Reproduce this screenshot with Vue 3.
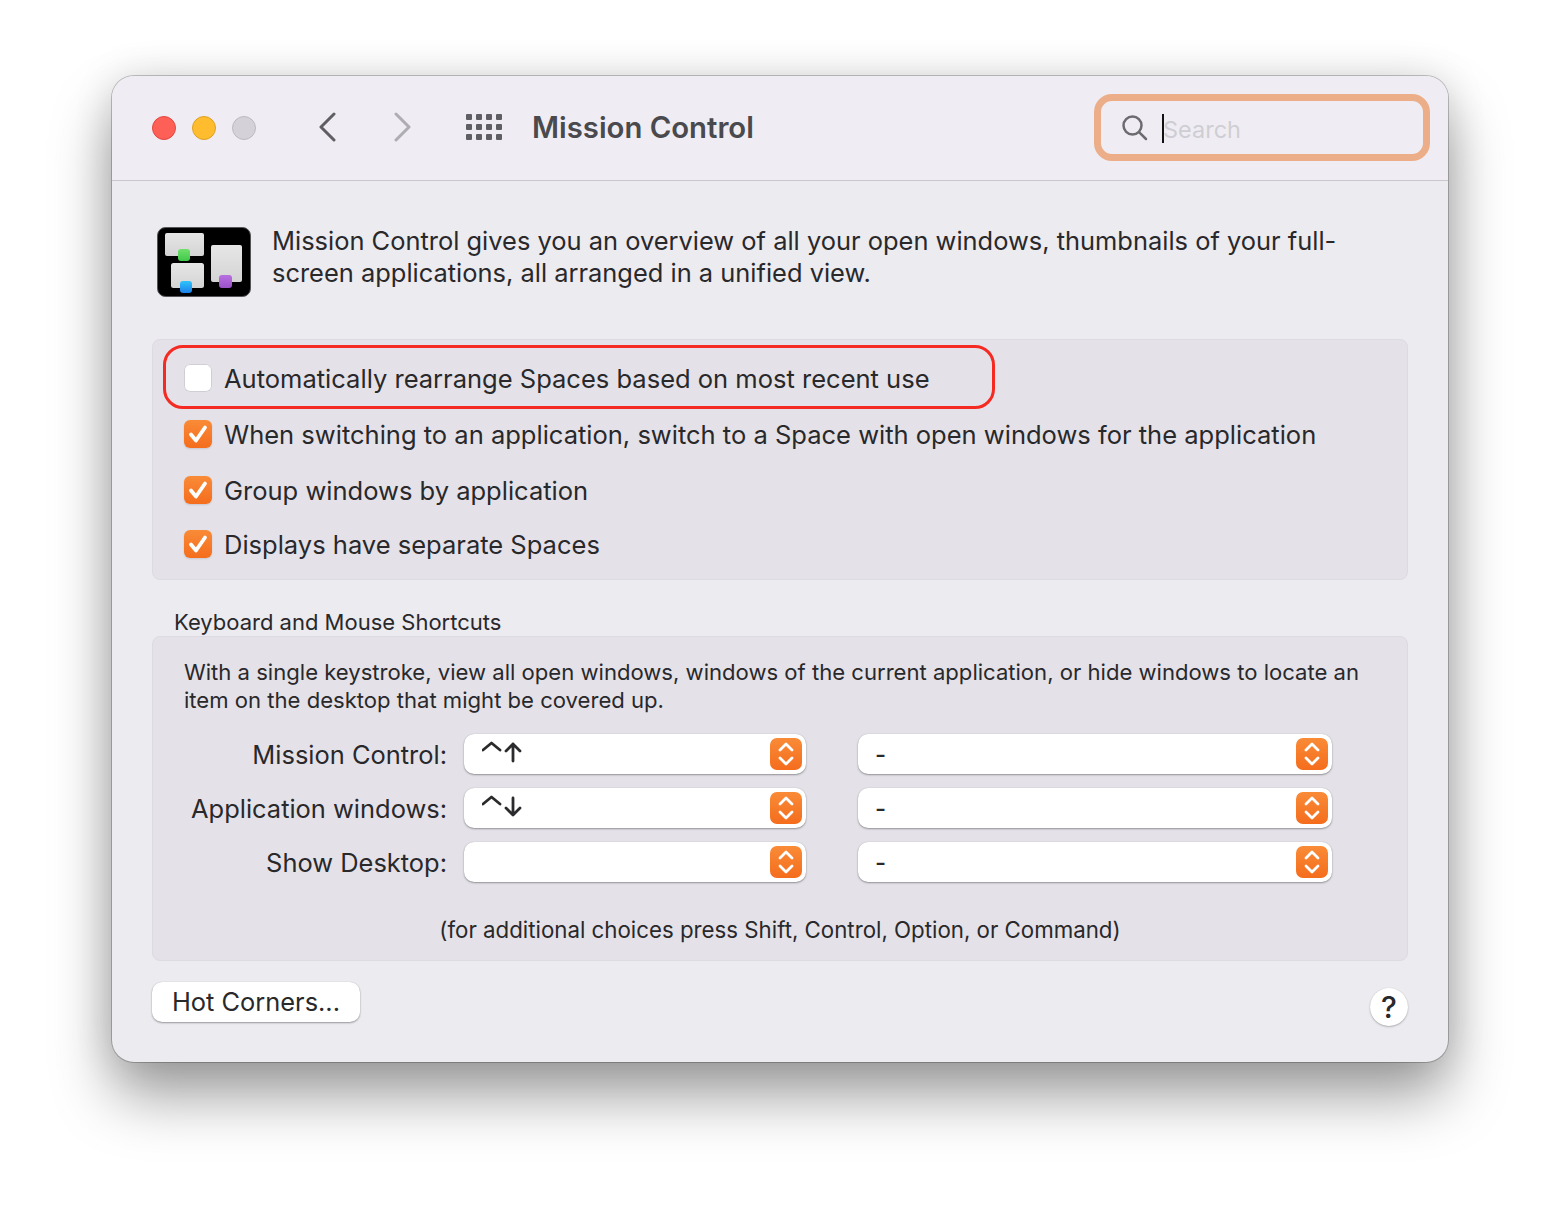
<script setup>
const options = [
  { label: 'Automatically rearrange Spaces based on most recent use', checked: false, highlight: true },
  { label: 'When switching to an application, switch to a Space with open windows for the application', checked: true },
  { label: 'Group windows by application', checked: true },
  { label: 'Displays have separate Spaces', checked: true },
]
const shortcuts = [
  { label: 'Mission Control:', key: 'up' },
  { label: 'Application windows:', key: 'down' },
  { label: 'Show Desktop:', key: '' },
]
</script>

<template>
  <div class="page">
    <main class="window">
      <header class="titlebar">
        <div class="lights">
          <span class="light red"></span>
          <span class="light yellow"></span>
          <span class="light gray"></span>
        </div>
        <svg class="chev back" width="18" height="30" viewBox="0 0 18 30"><path d="M16 2 3 15l13 13" /></svg>
        <svg class="chev fwd" width="18" height="30" viewBox="0 0 18 30"><path d="M2 2l13 13L2 28" /></svg>
        <div class="apps"><i v-for="n in 12" :key="n"></i></div>
        <h1 class="title">Mission Control</h1>
        <div class="search">
          <svg width="28" height="28" viewBox="0 0 28 28" class="glass"><circle cx="11.500" cy="11.500" r="9" /><path d="M18.300 18.300 25 25" /></svg>
          <span class="caret"></span>
          <span class="placeholder">Search</span>
        </div>
      </header>

      <div class="content">
        <section class="intro">
          <svg class="mc-icon" width="94" height="70" viewBox="0 0 94 70">
            <defs>
              <linearGradient id="gw" x1="0" y1="0" x2="0" y2="1"><stop offset="0" stop-color="#e6e6e6" /><stop offset="1" stop-color="#d4d4d4" /></linearGradient>
              <linearGradient id="gg" x1="0" y1="0" x2="0" y2="1"><stop offset="0" stop-color="#6fe06a" /><stop offset="1" stop-color="#3fc94a" /></linearGradient>
              <linearGradient id="gb" x1="0" y1="0" x2="0" y2="1"><stop offset="0" stop-color="#2fc4fa" /><stop offset="1" stop-color="#1c80ea" /></linearGradient>
              <linearGradient id="gp" x1="0" y1="0" x2="0" y2="1"><stop offset="0" stop-color="#b76fe0" /><stop offset="1" stop-color="#9a52c8" /></linearGradient>
            </defs>
            <rect x="0.500" y="0.500" width="93" height="69" rx="8" fill="#000" stroke="#55545a" stroke-width="1" />
            <rect x="8" y="6" width="39" height="23" rx="2" fill="url(#gw)" />
            <rect x="14" y="36" width="33" height="25" rx="2.500" fill="url(#gw)" />
            <rect x="54" y="18" width="31" height="37" rx="2" fill="url(#gw)" />
            <rect x="21" y="22" width="12" height="12" rx="3" fill="url(#gg)" />
            <rect x="23" y="54" width="12" height="12" rx="3" fill="url(#gb)" />
            <rect x="62" y="48" width="13" height="13" rx="3" fill="url(#gp)" />
          </svg>
          <p>Mission Control gives you an overview of all your open windows, thumbnails of your full-<br />screen applications, all arranged in a unified view.</p>
        </section>

        <section class="panel options">
          <div v-for="o in options" :key="o.label" class="option" :class="{ hl: o.highlight }">
            <span v-if="o.highlight" class="ring"></span>
            <span class="check" :class="{ on: o.checked }">
              <svg v-if="o.checked" width="28" height="28" viewBox="0 0 28 28"><path d="M7 14.500l5 6L21 7.500" /></svg>
            </span>
            <span>{{ o.label }}</span>
          </div>
        </section>

        <h2 class="section-label">Keyboard and Mouse Shortcuts</h2>
        <section class="panel shortcuts">
          <p class="blurb">With a single keystroke, view all open windows, windows of the current application, or hide windows to locate an<br />item on the desktop that might be covered up.</p>
          <div class="rows">
            <template v-for="s in shortcuts" :key="s.label">
              <label class="row-label">{{ s.label }}</label>
              <div class="select first">
                <svg v-if="s.key" class="keys" width="42" height="24" viewBox="0 0 42 24">
                  <path d="M1 9 9.500 2 18 9" />
                  <path v-if="s.key === 'up'" d="M24 10l7-7 7 7M31 3v17" />
                  <path v-else d="M24 13l7 7 7-7M31 3v17" />
                </svg>
                <span class="stepper"><svg width="32" height="32" viewBox="0 0 32 32"><path d="M10 12l6-6 6 6M10 20l6 6 6-6" /></svg></span>
              </div>
              <div class="select second">
                <span class="dash">-</span>
                <span class="stepper"><svg width="32" height="32" viewBox="0 0 32 32"><path d="M10 12l6-6 6 6M10 20l6 6 6-6" /></svg></span>
              </div>
            </template>
          </div>
          <p class="note">(for additional choices press Shift, Control, Option, or Command)</p>
        </section>

        <footer class="footer">
          <button class="btn">Hot Corners...</button>
          <button class="help">?</button>
        </footer>
      </div>
    </main>
  </div>
</template>

<style>
html, body { margin: 0; background: #fff; }
</style>

<style scoped>
.page {
  width: 1560px;
  height: 1210px;
  box-sizing: border-box;
  padding: 76px 112px 0;
  font-family: Inter, "Liberation Sans", sans-serif;
  color: #29282b;
  overflow: hidden;
}
.window {
  width: 1336px;
  height: 986px;
  border-radius: 22px;
  background: #ecebf0;
  box-shadow: 0 0 0 1px rgba(0, 0, 0, 0.22), 0 34px 60px rgba(0, 0, 0, 0.38), 0 0 40px rgba(0, 0, 0, 0.12);
  overflow: hidden;
  display: flex;
  flex-direction: column;
}
.titlebar {
  height: 104px;
  flex: none;
  background: #efedf3;
  border-bottom: 1px solid #c9c7cc;
  display: flex;
  align-items: center;
  padding: 0 18px 0 40px;
}
.lights { display: flex; gap: 16px; }
.light { width: 24px; height: 24px; border-radius: 50%; box-sizing: border-box; border: 1px solid; }
.red { background: #fe5f57; border-color: #e3463f; }
.yellow { background: #febc2e; border-color: #dea123; }
.gray { background: #d4d2d8; border-color: #bcbac0; }
.chev { fill: none; stroke-width: 3; stroke-linecap: round; stroke-linejoin: round; margin-top: -2px; }
.back { margin-left: 62px; stroke: #5f5e62; }
.fwd { margin-left: 58px; stroke: #aeadb1; }
.apps {
  margin-left: 54px;
  margin-top: -2px;
  display: grid;
  grid-template-columns: repeat(4, 6px);
  grid-auto-rows: 6px;
  gap: 4px 4px;
}
.apps i { background: #5f5e62; border-radius: 1px; }
.title {
  margin: -2px 0 0 30px;
  font-size: 29.300px;
  font-weight: 600;
  color: #4a494d;
  letter-spacing: 0;
  flex: 1;
}
.search {
  width: 336px;
  height: 67px;
  box-sizing: border-box;
  border: 7px solid #ecae88;
  border-radius: 18px;
  display: flex;
  align-items: center;
  margin-top: -1px;
  padding-left: 20px;
}
.glass { fill: none; stroke: #6c6b70; stroke-width: 2.500; stroke-linecap: round; }
.caret { width: 2px; height: 29px; background: #111; margin: 2px 0 0 13px; }
.placeholder { font-size: 23.500px; color: #cfcdd4; margin: 4px 0 0 -1px; }
.content { flex: 1; padding: 0 40px; display: flex; flex-direction: column; }
.intro { display: flex; gap: 21px; padding: 46px 0 0 5px; height: 112px; box-sizing: content-box; flex: none; }
.intro p { margin: -2px 0 0; font-size: 25.440px; line-height: 32px; }
.mc-icon { flex: none; }
.panel {
  background: #e4e2e8;
  border: 1px solid #dddbe1;
  border-radius: 8px;
  box-sizing: border-box;
}
.options { height: 241px; padding: 10px 0 0 31px; flex: none; }
.option { position: relative; display: flex; align-items: center; gap: 12px; font-size: 25.530px; height: 56px; }
.option:nth-child(4) { margin-top: -2px; }
.ring {
  position: absolute;
  left: -21px;
  top: -5px;
  width: 832px;
  height: 64px;
  border: 3px solid #f52a22;
  border-radius: 20px;
  box-sizing: border-box;
}
.check {
  width: 28px;
  height: 28px;
  border-radius: 6px;
  background: #fff;
  box-shadow: inset 0 0 0 1px #d0ced3;
  flex: none;
  display: block;
}
.check.on { background: linear-gradient(#f98b37, #f46d1d); box-shadow: 0 1px 2px rgba(0, 0, 0, 0.12); }
.check svg { display: block; fill: none; stroke: #fff; stroke-width: 3.800; stroke-linecap: round; stroke-linejoin: round; }
.section-label { margin: 29px 0 1px 22px; font-size: 22px; line-height: 26px; font-weight: 400; flex: none; }
.shortcuts { height: 325px; padding: 21px 0 0 31px; position: relative; flex: none; }
.blurb { margin: 0; font-size: 22.090px; line-height: 28px; }
.rows {
  margin-top: 20px;
  display: grid;
  grid-template-columns: 280px 342px 474px;
  grid-auto-rows: 40px;
  row-gap: 14px;
  column-gap: 0;
  align-items: center;
}
.row-label { font-size: 25.450px; text-align: right; padding-right: 17px; margin-left: -31px; }
.select {
  height: 40px;
  background: #fff;
  border-radius: 10px;
  box-shadow: 0 1px 2px rgba(0, 0, 0, 0.35), 0 0 1px rgba(0, 0, 0, 0.2);
  position: relative;
  display: flex;
  align-items: center;
}
.second { margin-left: 52px; width: 474px; }
.keys { margin-left: 18px; margin-top: -2px; fill: none; stroke: #2b2b2d; stroke-width: 2.800; stroke-linecap: round; stroke-linejoin: round; }
.dash { margin-left: 17px; font-size: 24px; font-weight: 500; }
.stepper {
  position: absolute;
  right: 4px;
  top: 4px;
  width: 32px;
  height: 32px;
  border-radius: 7px;
  background: linear-gradient(#f98b37, #f46d1d);
}
.stepper svg { display: block; fill: none; stroke: #fff; stroke-width: 2.800; stroke-linecap: round; stroke-linejoin: round; }
.note {
  margin: 0;
  position: absolute;
  left: 0;
  right: 0;
  top: 279px;
  text-align: center;
  font-size: 22.270px;
  line-height: 28px;
}
.footer { display: flex; justify-content: space-between; align-items: flex-start; margin-top: 21px; }
.btn {
  width: 208px;
  height: 40px;
  border: 0;
  border-radius: 10px;
  background: #fff;
  box-shadow: 0 1px 2px rgba(0, 0, 0, 0.35), 0 0 1px rgba(0, 0, 0, 0.2);
  font: 25.400px Inter, "Liberation Sans", sans-serif;
  color: #29282b;
  padding: 0 0 2px;
}
.help {
  width: 38px;
  height: 38px;
  margin-top: 6px;
  border: 0;
  border-radius: 50%;
  background: #fff;
  box-shadow: 0 1px 2px rgba(0, 0, 0, 0.25), 0 0 1px rgba(0, 0, 0, 0.15);
  font: 500 30px Inter, "Liberation Sans", sans-serif;
  color: #29282b;
  padding: 0;
}
</style>
